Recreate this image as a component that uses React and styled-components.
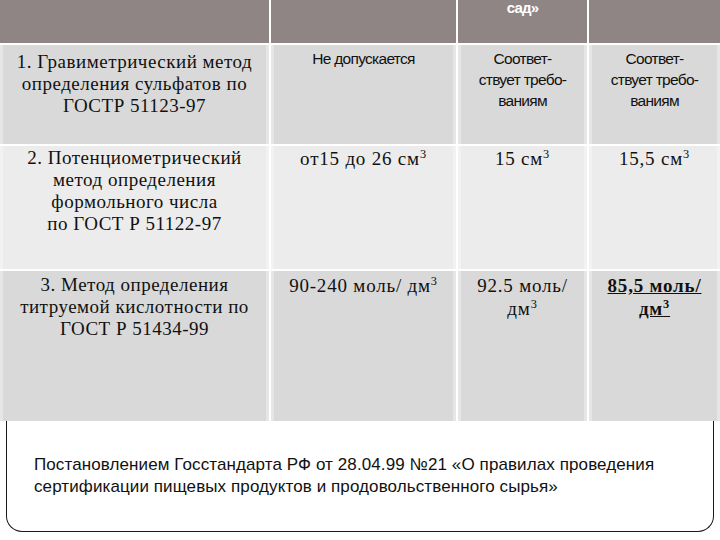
import React from "react";
import styled, { createGlobalStyle } from "styled-components";

const Global = createGlobalStyle`
  body {
    margin: 0;
    background: #ffffff;
  }
`;

const rows = [
  {
    shade: "dark",
    height: 99,
    pad: 6,
    method: ["1. Гравиметрический метод", "определения сульфатов по", "ГОСТР 51123-97"],
    cells: [
      { kind: "narrow", lines: ["Не допускается"] },
      { kind: "narrow", lines: ["Соответ-", "ствует требо-", "ваниям"] },
      { kind: "narrow", lines: ["Соответ-", "ствует требо-", "ваниям"] },
    ],
  },
  {
    shade: "light",
    height: 123,
    pad: 1,
    method: ["2. Потенциометрический", "метод определения", "формольного числа", "по ГОСТ Р 51122-97"],
    cells: [
      { kind: "serif", lines: [["от15 до 26 см", "3"]] },
      { kind: "serif", lines: [["15 см", "3"]] },
      { kind: "serif", lines: [["15,5 см", "3"]] },
    ],
  },
  {
    shade: "dark",
    height: 150,
    pad: 3,
    method: ["3. Метод определения", "титруемой кислотности по", "ГОСТ Р 51434-99"],
    cells: [
      { kind: "serif", lines: [["90-240 моль/ дм", "3"]] },
      { kind: "serif", lines: ["92.5 моль/", ["дм", "3"]] },
      { kind: "serif", strong: true, lines: ["85,5 моль/", ["дм", "3"]] },
    ],
  },
];

const renderLine = (line, i) =>
  Array.isArray(line) ? (
    <Line key={i}>
      {line[0]}
      <Sup>{line[1]}</Sup>
    </Line>
  ) : (
    <Line key={i}>{line}</Line>
  );

const App = () => {
  return (
    <>
      <Global />
      <Page>
        <Table>
          <HeadCell />
          <HeadCell />
          <HeadCell>
            <HeadText>сад»</HeadText>
          </HeadCell>
          <HeadCell />
          {rows.map((row, r) => (
            <React.Fragment key={r}>
              <Cell shade={row.shade} height={row.height}>
                <MethodText pad={row.pad}>{row.method.map(renderLine)}</MethodText>
              </Cell>
              {row.cells.map((cell, c) =>
                cell.kind === "narrow" ? (
                  <Cell key={c} shade={row.shade} height={row.height}>
                    <NarrowText>{cell.lines.map(renderLine)}</NarrowText>
                  </Cell>
                ) : (
                  <Cell key={c} shade={row.shade} height={row.height}>
                    <ValueText pad={row.pad} strong={cell.strong}>
                      {cell.lines.map(renderLine)}
                    </ValueText>
                  </Cell>
                )
              )}
            </React.Fragment>
          ))}
        </Table>
        <Note>
          <NoteText>
            Постановлением Госстандарта РФ от 28.04.99 №21 «О правилах проведения
            <br />
            сертификации пищевых продуктов и продовольственного сырья»
          </NoteText>
        </Note>
      </Page>
    </>
  );
};

const Page = styled.div`
  width: 720px;
  height: 540px;
  overflow: hidden;
  background: #ffffff;
`;

const Table = styled.div`
  display: grid;
  grid-template-columns: 269px 185px 129px 1fr;
  column-gap: 2px;
  row-gap: 2px;
  background: #ffffff;
`;

const HeadCell = styled.div`
  height: 43px;
  background: #8f8585;
  display: flex;
  justify-content: center;
  align-items: flex-start;
  overflow: hidden;
`;

const HeadText = styled.div`
  color: #ffffff;
  font-family: "Liberation Sans", sans-serif;
  font-weight: bold;
  font-size: 15px;
  letter-spacing: -0.8px;
  line-height: 16px;
`;

const Cell = styled.div`
  height: ${p => p.height}px;
  background: ${p => (p.shade === "dark" ? "#d9d9d9" : "#ececec")};
  box-shadow: inset -3px 0 0 rgba(255, 255, 255, 0.35), inset 3px 0 0 rgba(255, 255, 255, 0.35);
  display: flex;
  justify-content: center;
  align-items: flex-start;
  text-align: center;
  color: #111111;
`;

const MethodText = styled.div`
  padding-top: ${p => p.pad}px;
  font-family: "Liberation Serif", "DejaVu Serif", serif;
  font-size: 19px;
  letter-spacing: 0.5px;
  line-height: 22px;
`;

const NarrowText = styled.div`
  padding-top: 3px;
  font-family: "Liberation Sans", sans-serif;
  font-size: 15.5px;
  letter-spacing: -0.7px;
  line-height: 21px;
`;

const ValueText = styled.div`
  padding-top: ${p => p.pad}px;
  font-family: "Liberation Serif", "DejaVu Serif", serif;
  font-size: 19px;
  letter-spacing: 0.8px;
  line-height: 23px;
  font-weight: ${p => (p.strong ? "bold" : "normal")};
  text-decoration: ${p => (p.strong ? "underline" : "none")};
`;

const Line = styled.div`
  white-space: nowrap;
`;

const Sup = styled.sup`
  font-size: 0.65em;
  line-height: 0;
`;

const Note = styled.div`
  margin: 0 6px;
  height: 111px;
  border: 1.5px solid #1a1a1a;
  border-top: none;
  border-radius: 0 0 16px 16px;
  box-sizing: border-box;
  padding: 33px 0 0 27px;
`;

const NoteText = styled.div`
  font-family: "Liberation Sans", sans-serif;
  font-size: 17px;
  letter-spacing: 0.1px;
  line-height: 22px;
  color: #111111;
`;

export default App;
